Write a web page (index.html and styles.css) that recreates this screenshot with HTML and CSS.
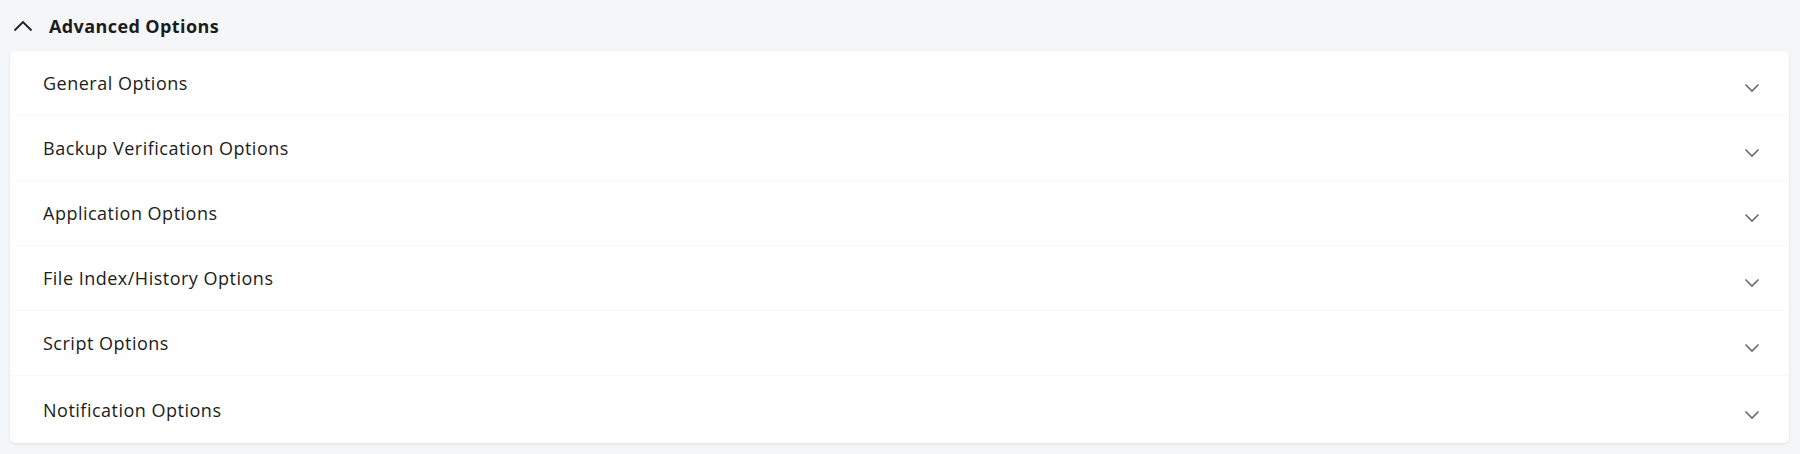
FILE: index.html
```html
<!DOCTYPE html>
<html lang="en">

<head>
    <meta charset="UTF-8">
    <meta name="viewport" content="width=device-width, initial-scale=1.0">
    <title>Advanced Options</title>
    <link rel="stylesheet" href="styles.css">
</head>

<body>
    <div class="section">
        <div class="section-header">
            <svg class="icon-up" width="20" height="12" viewBox="0 0 20 12">
                <polyline points="1.5,10.5 10,2 18.5,10.5" fill="none" stroke="#1f1f1f" stroke-width="1.8" />
            </svg>
            <span class="section-title">Advanced Options</span>
        </div>

        <div class="card">
            <div class="row">
                <span class="row-label">General Options</span>
                <svg class="icon-down" width="16" height="10" viewBox="0 0 16 10">
                    <polyline points="1.5,1.5 8,8 14.5,1.5" fill="none" stroke="#6b6b6b" stroke-width="1.6" />
                </svg>
            </div>
            <div class="row">
                <span class="row-label">Backup Verification Options</span>
                <svg class="icon-down" width="16" height="10" viewBox="0 0 16 10">
                    <polyline points="1.5,1.5 8,8 14.5,1.5" fill="none" stroke="#6b6b6b" stroke-width="1.6" />
                </svg>
            </div>
            <div class="row">
                <span class="row-label">Application Options</span>
                <svg class="icon-down" width="16" height="10" viewBox="0 0 16 10">
                    <polyline points="1.5,1.5 8,8 14.5,1.5" fill="none" stroke="#6b6b6b" stroke-width="1.6" />
                </svg>
            </div>
            <div class="row">
                <span class="row-label">File Index/History Options</span>
                <svg class="icon-down" width="16" height="10" viewBox="0 0 16 10">
                    <polyline points="1.5,1.5 8,8 14.5,1.5" fill="none" stroke="#6b6b6b" stroke-width="1.6" />
                </svg>
            </div>
            <div class="row">
                <span class="row-label">Script Options</span>
                <svg class="icon-down" width="16" height="10" viewBox="0 0 16 10">
                    <polyline points="1.5,1.5 8,8 14.5,1.5" fill="none" stroke="#6b6b6b" stroke-width="1.6" />
                </svg>
            </div>
            <div class="row">
                <span class="row-label">Notification Options</span>
                <svg class="icon-down" width="16" height="10" viewBox="0 0 16 10">
                    <polyline points="1.5,1.5 8,8 14.5,1.5" fill="none" stroke="#6b6b6b" stroke-width="1.6" />
                </svg>
            </div>
        </div>
    </div>
</body>

</html>
```

FILE: styles.css
```css
body {
    font-family: "Open Sans", Arial, sans-serif;
    background-color: #f5f6f8;
    color: #1c1c1c;
    margin: 0;
    padding: 0;
}

.section {
    padding: 0 11px 11px 10px;
}

.section-header {
    display: flex;
    align-items: center;
    height: 51px;
    padding-left: 3px;
}

.icon-up {
    margin-right: 16px;
}

.section-title {
    font-size: 18px;
    font-weight: 700;
    letter-spacing: 0.4px;
}

.card {
    background: white;
    border-radius: 5px;
    box-shadow: 0 1px 3px rgba(0, 0, 0, 0.1);
}

.row {
    display: flex;
    align-items: center;
    justify-content: space-between;
    height: 65px;
    padding: 0 29px 0 33px;
    border-bottom: 1px solid #f8f8f8;
    box-sizing: border-box;
}

.row:last-child {
    border-bottom: none;
    height: 67px;
}

.row-label {
    font-size: 18px;
    letter-spacing: 0.5px;
}

.icon-down {
    margin-top: 10px;
}
```
